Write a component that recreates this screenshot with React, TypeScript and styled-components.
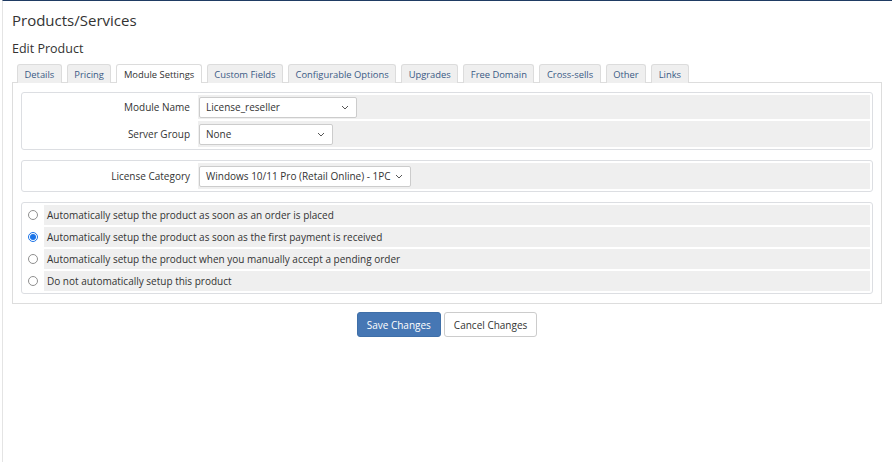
import React from 'react';
import styled, { createGlobalStyle } from 'styled-components';

const GlobalStyle = createGlobalStyle`
  html, body {
    margin: 0;
    padding: 0;
    background: #fff;
  }
  body {
    font-family: 'Open Sans', 'Liberation Sans', sans-serif;
    color: #333;
    font-size: 10px;
  }
`;

const Page = styled.div`
  min-height: 462px;
  box-sizing: border-box;
  border-top: 1px solid #1f3b63;
  margin-left: 2px;
  border-left: 1px solid #e4e4e4;
  padding: 9px 10px 0 9px;
`;

const Title = styled.h1`
  margin: 0;
  font-size: 15px;
  font-weight: 400;
  line-height: 20px;
  color: #333;
`;

const SubTitle = styled.h2`
  margin: 11px 0 0;
  font-size: 12.5px;
  font-weight: 400;
  line-height: 16px;
  color: #333;
`;

const TabBar = styled.ul`
  display: flex;
  gap: 5px;
  list-style: none;
  margin: 6px 0 0;
  padding: 0 0 0 5px;
`;

const Tab = styled.li<{ $active?: boolean }>`
  height: 18px;
  padding: 0 6.5px;
  display: flex;
  align-items: center;
  font-size: 9.4px;
  border: 1px solid #dcdcdc;
  border-bottom: none;
  border-radius: 3px 3px 0 0;
  background: ${(p) => (p.$active ? '#fff' : '#efefef')};
  color: ${(p) => (p.$active ? '#333' : '#3a5a85')};
  position: relative;
  top: 1px;
  z-index: ${(p) => (p.$active ? 1 : 0)};
`;

const Panel = styled.div`
  border: 1px solid #ddd;
  padding: 9px 8px 9px;
  display: flex;
  flex-direction: column;
  gap: 10px;
`;

const FormTable = styled.div`
  border: 1px solid #dcdee2;
  border-radius: 3px;
  padding: 2px;
  display: flex;
  flex-direction: column;
  gap: 2px;
`;

const Row = styled.div<{ $h: number }>`
  display: flex;
  gap: 2px;
  height: ${(p) => p.$h}px;
`;

const Label = styled.div`
  width: 172px;
  flex-shrink: 0;
  display: flex;
  align-items: center;
  justify-content: flex-end;
  padding-right: 6px;
  box-sizing: border-box;
`;

const Field = styled.div`
  flex: 1;
  background: #efefef;
  display: flex;
  align-items: center;
  padding-left: 1px;
`;

const Select = styled.div<{ $w: number }>`
  width: ${(p) => p.$w}px;
  height: 21px;
  box-sizing: border-box;
  background: #fff;
  border: 1px solid #ccc;
  border-radius: 2px;
  display: flex;
  align-items: center;
  justify-content: space-between;
  padding: 0 7px 0 6px;
  white-space: nowrap;
  color: #333;
`;

const Chevron = () => (
  <svg width="8" height="5" viewBox="0 0 8 5" fill="none">
    <path d="M1 1l3 3 3-3" stroke="#555" strokeWidth="1" />
  </svg>
);

const RadioCell = styled.div`
  width: 18px;
  flex-shrink: 0;
  display: flex;
  align-items: center;
  justify-content: center;
`;

const Radio = styled.span<{ $checked?: boolean }>`
  width: 10px;
  height: 10px;
  border-radius: 50%;
  box-sizing: border-box;
  border: ${(p) => (p.$checked ? '1px solid #1a73e8' : '1px solid #8f8f8f')};
  background: #fff;
  display: flex;
  align-items: center;
  justify-content: center;
  &::after {
    content: '';
    display: ${(p) => (p.$checked ? 'block' : 'none')};
    width: 6px;
    height: 6px;
    border-radius: 50%;
    background: #1a73e8;
  }
`;

const RadioText = styled(Field)`
  padding-left: 3px;
`;

const Actions = styled.div`
  display: flex;
  justify-content: center;
  gap: 3px;
  margin-top: 8px;
`;

const Button = styled.button<{ $primary?: boolean }>`
  height: 25px;
  padding: 0 9px;
  font-family: 'Open Sans', 'Liberation Sans', sans-serif;
  font-size: 10px;
  border-radius: 3px;
  border: 1px solid ${(p) => (p.$primary ? '#3f6fa8' : '#ccc')};
  background: ${(p) => (p.$primary ? '#4677b4' : '#fff')};
  color: ${(p) => (p.$primary ? '#fff' : '#333')};
`;

const tabs = [
  'Details',
  'Pricing',
  'Module Settings',
  'Custom Fields',
  'Configurable Options',
  'Upgrades',
  'Free Domain',
  'Cross-sells',
  'Other',
  'Links',
];

const options = [
  'Automatically setup the product as soon as an order is placed',
  'Automatically setup the product as soon as the first payment is received',
  'Automatically setup the product when you manually accept a pending order',
  'Do not automatically setup this product',
];

export default function App() {
  return (
    <>
      <GlobalStyle />
      <Page>
        <Title>Products/Services</Title>
        <SubTitle>Edit Product</SubTitle>
        <TabBar>
          {tabs.map((t) => (
            <Tab key={t} $active={t === 'Module Settings'}>
              {t}
            </Tab>
          ))}
        </TabBar>
        <Panel>
          <FormTable>
            <Row $h={24}>
              <Label>Module Name</Label>
              <Field>
                <Select $w={158}>
                  License_reseller
                  <Chevron />
                </Select>
              </Field>
            </Row>
            <Row $h={26}>
              <Label>Server Group</Label>
              <Field>
                <Select $w={134}>
                  None
                  <Chevron />
                </Select>
              </Field>
            </Row>
          </FormTable>
          <FormTable>
            <Row $h={26}>
              <Label>License Category</Label>
              <Field>
                <Select $w={212}>
                  Windows 10/11 Pro (Retail Online) - 1PC
                  <Chevron />
                </Select>
              </Field>
            </Row>
          </FormTable>
          <FormTable>
            {options.map((o, i) => (
              <Row $h={20} key={o}>
                <RadioCell>
                  <Radio $checked={i === 1} />
                </RadioCell>
                <RadioText>{o}</RadioText>
              </Row>
            ))}
          </FormTable>
        </Panel>
        <Actions>
          <Button $primary>Save Changes</Button>
          <Button>Cancel Changes</Button>
        </Actions>
      </Page>
    </>
  );
}
